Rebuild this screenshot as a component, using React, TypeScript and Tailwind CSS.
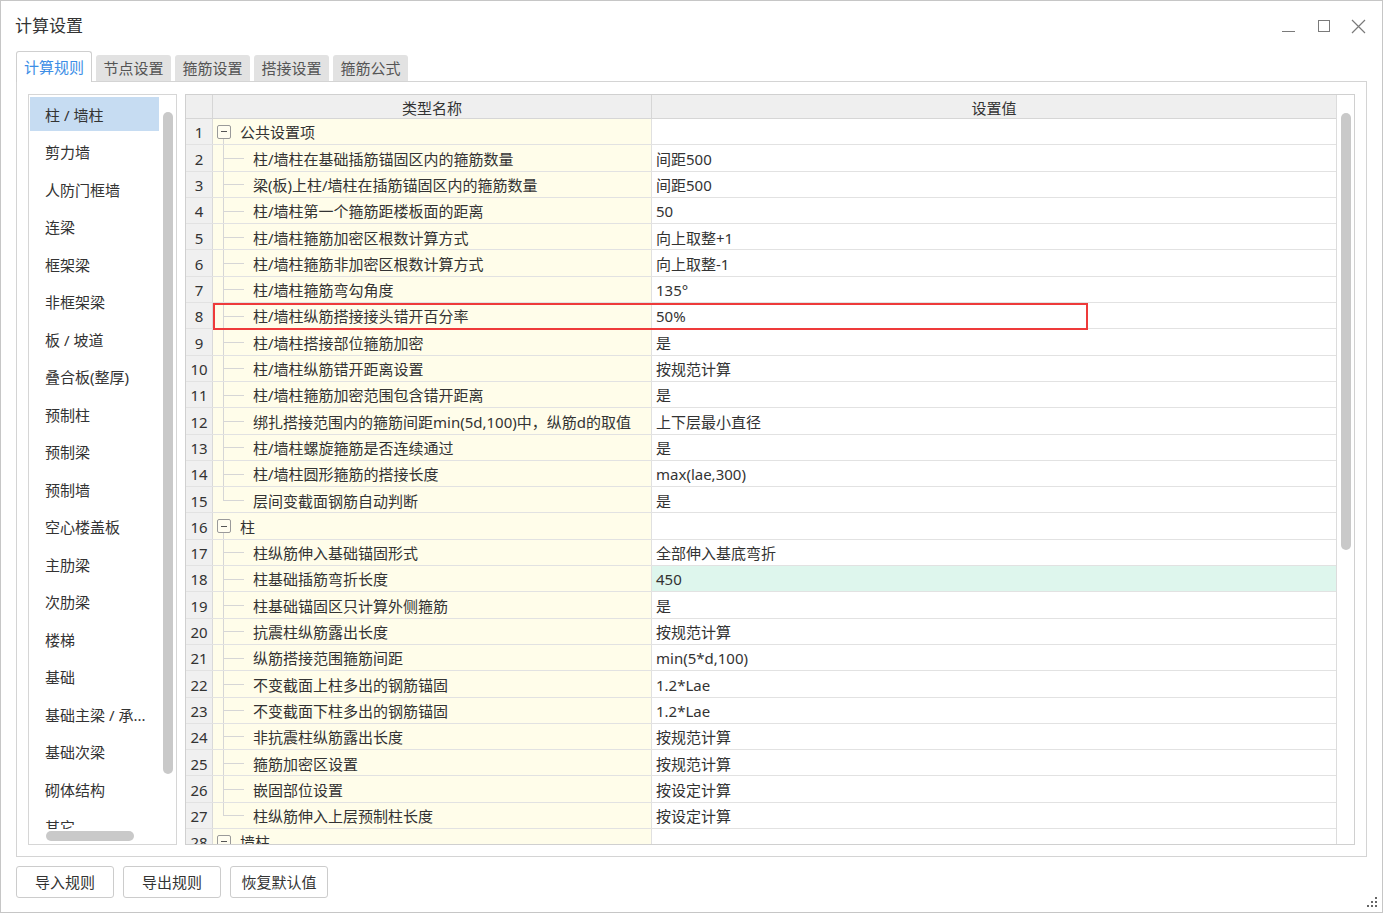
import React from "react";

type Row = {
  n: number;
  name: string;
  value: string;
  kind: "group" | "child" | "last";
  green?: boolean;
};

const rows: Row[] = [
  { n: 1, name: "公共设置项", value: "", kind: "group" },
  { n: 2, name: "柱/墙柱在基础插筋锚固区内的箍筋数量", value: "间距500", kind: "child" },
  { n: 3, name: "梁(板)上柱/墙柱在插筋锚固区内的箍筋数量", value: "间距500", kind: "child" },
  { n: 4, name: "柱/墙柱第一个箍筋距楼板面的距离", value: "50", kind: "child" },
  { n: 5, name: "柱/墙柱箍筋加密区根数计算方式", value: "向上取整+1", kind: "child" },
  { n: 6, name: "柱/墙柱箍筋非加密区根数计算方式", value: "向上取整-1", kind: "child" },
  { n: 7, name: "柱/墙柱箍筋弯勾角度", value: "135°", kind: "child" },
  { n: 8, name: "柱/墙柱纵筋搭接接头错开百分率", value: "50%", kind: "child" },
  { n: 9, name: "柱/墙柱搭接部位箍筋加密", value: "是", kind: "child" },
  { n: 10, name: "柱/墙柱纵筋错开距离设置", value: "按规范计算", kind: "child" },
  { n: 11, name: "柱/墙柱箍筋加密范围包含错开距离", value: "是", kind: "child" },
  { n: 12, name: "绑扎搭接范围内的箍筋间距min(5d,100)中，纵筋d的取值", value: "上下层最小直径", kind: "child" },
  { n: 13, name: "柱/墙柱螺旋箍筋是否连续通过", value: "是", kind: "child" },
  { n: 14, name: "柱/墙柱圆形箍筋的搭接长度", value: "max(lae,300)", kind: "child" },
  { n: 15, name: "层间变截面钢筋自动判断", value: "是", kind: "last" },
  { n: 16, name: "柱", value: "", kind: "group" },
  { n: 17, name: "柱纵筋伸入基础锚固形式", value: "全部伸入基底弯折", kind: "child" },
  { n: 18, name: "柱基础插筋弯折长度", value: "450", kind: "child", green: true },
  { n: 19, name: "柱基础锚固区只计算外侧箍筋", value: "是", kind: "child" },
  { n: 20, name: "抗震柱纵筋露出长度", value: "按规范计算", kind: "child" },
  { n: 21, name: "纵筋搭接范围箍筋间距", value: "min(5*d,100)", kind: "child" },
  { n: 22, name: "不变截面上柱多出的钢筋锚固", value: "1.2*Lae", kind: "child" },
  { n: 23, name: "不变截面下柱多出的钢筋锚固", value: "1.2*Lae", kind: "child" },
  { n: 24, name: "非抗震柱纵筋露出长度", value: "按规范计算", kind: "child" },
  { n: 25, name: "箍筋加密区设置", value: "按规范计算", kind: "child" },
  { n: 26, name: "嵌固部位设置", value: "按设定计算", kind: "child" },
  { n: 27, name: "柱纵筋伸入上层预制柱长度", value: "按设定计算", kind: "last" },
  { n: 28, name: "墙柱", value: "", kind: "group" },
];

const categories = [
  "柱 / 墙柱",
  "剪力墙",
  "人防门框墙",
  "连梁",
  "框架梁",
  "非框架梁",
  "板 / 坡道",
  "叠合板(整厚)",
  "预制柱",
  "预制梁",
  "预制墙",
  "空心楼盖板",
  "主肋梁",
  "次肋梁",
  "楼梯",
  "基础",
  "基础主梁 / 承...",
  "基础次梁",
  "砌体结构",
  "其它",
];

const tabs = ["计算规则", "节点设置", "箍筋设置", "搭接设置", "箍筋公式"];

function TreeCell({ row }: { row: Row }) {
  if (row.kind === "group") {
    return (
      <div className="relative flex h-full w-[439px] shrink-0 items-center border-r border-[#e0e0e0] bg-[#fffdea]">
        <span className="absolute left-[10px] top-1/2 bottom-0 w-px bg-[#d6d6d6]" />
        <span className="relative z-10 ml-[4px] flex h-[14px] w-[14px] items-center justify-center rounded-[2px] border border-[#9a9a9a] bg-[#fffdf0]">
          <span className="h-px w-[6px] bg-[#555]" />
        </span>
        <span className="ml-[9px] pt-[2px]">{row.name}</span>
      </div>
    );
  }
  return (
    <div className="relative flex h-full w-[439px] shrink-0 items-center border-r border-[#e0e0e0] bg-[#fffdea]">
      <span
        className={`absolute left-[10px] top-0 w-px bg-[#d6d6d6] ${
          row.kind === "last" ? "h-1/2" : "bottom-0"
        }`}
      />
      <span className="absolute left-[10px] top-1/2 h-px w-[21px] bg-[#d6d6d6]" />
      <span className="ml-[40px] whitespace-nowrap pt-[2px]">{row.name}</span>
    </div>
  );
}

export default function App() {
  return (
    <div className="relative flex h-[913px] w-[1383px] flex-col overflow-hidden border border-[#c6c6c6] bg-white font-['Noto_Sans','Noto_Sans_CJK_SC',sans-serif] text-[15px] text-[#333]">
      {/* title bar */}
      <div className="flex h-[50px] shrink-0 items-center justify-between pl-[14px]">
        <span className="text-[17px] text-[#333]">计算设置</span>
        <div className="flex items-center">
          <svg width="14" height="14" viewBox="0 0 14 14" className="mr-[21px] mt-[3px]">
            <line x1="0" y1="10.5" x2="13" y2="10.5" stroke="#7a7a7a" strokeWidth="1" />
          </svg>
          <svg width="14" height="14" viewBox="0 0 14 14" className="mr-[20px]">
            <rect x="1.5" y="1.5" width="11" height="11" fill="none" stroke="#7a7a7a" strokeWidth="1" />
          </svg>
          <svg width="15" height="15" viewBox="0 0 15 15" className="mr-[16px]">
            <path d="M1 1 L14 14 M14 1 L1 14" stroke="#7a7a7a" strokeWidth="1.2" />
          </svg>
        </div>
      </div>

      {/* tabs */}
      <div className="flex h-[30px] shrink-0 items-end gap-[4px] pl-[15px]">
        {tabs.map((t, i) =>
          i === 0 ? (
            <div
              key={t}
              className="relative z-10 -mb-px flex h-[31px] w-[76px] items-center justify-center rounded-t-[3px] border border-b-0 border-[#cfcfcf] bg-white text-[#3d8ee6]"
            >
              {t}
            </div>
          ) : (
            <div
              key={t}
              className="flex h-[26px] w-[75px] items-center justify-center rounded-t-[3px] bg-[#e2e2e2] text-[#555]"
            >
              {t}
            </div>
          )
        )}
      </div>

      {/* panel */}
      <div className="mx-[15px] flex h-[776px] shrink-0 gap-[8px] border border-[#d4d4d4] px-[11px] pt-[12px] pb-[11px]">
        {/* category list */}
        <div className="flex h-[751px] w-[149px] shrink-0 flex-col border border-[#d6d6d6]">
          <div className="flex h-[734px] overflow-hidden">
            <div className="w-[130px] shrink-0 pl-px pt-[2px]">
              {categories.map((c, i) => (
                <div
                  key={c}
                  className={`mb-[3.5px] flex h-[34px] items-center whitespace-nowrap pl-[15px] pt-[2px] ${
                    i === 0 ? "bg-[#c6dcf2]" : ""
                  }`}
                >
                  {c}
                </div>
              ))}
            </div>
            <div className="flex-1 pl-[4px] pt-[17px]">
              <div className="h-[662px] w-[10px] rounded-full bg-[#c9c9c9]" />
            </div>
          </div>
          <div className="flex-1 pl-[17px] pt-[2px]">
            <div className="h-[10px] w-[88px] rounded-full bg-[#c9c9c9]" />
          </div>
        </div>

        {/* table */}
        <div className="relative flex h-[751px] flex-1 border border-[#d0d0d0]">
          <div className="flex flex-1 flex-col overflow-hidden">
            <div className="flex h-[24px] shrink-0 border-b border-[#d6d6d6] bg-[#efefef]">
              <div className="w-[27px] shrink-0 border-r border-[#d6d6d6]" />
              <div className="flex w-[439px] shrink-0 items-center justify-center border-r border-[#d6d6d6] pt-[3px]">
                类型名称
              </div>
              <div className="flex flex-1 items-center justify-center pt-[3px]">设置值</div>
            </div>
            {rows.map((r) => (
              <div key={r.n} className="flex h-[26.3px] shrink-0 border-b border-[#e2e2e2]">
                <div className="flex w-[27px] shrink-0 items-center justify-center border-r border-[#d9d9d9] bg-[#f0f0f0] pt-[2px]">
                  {r.n}
                </div>
                <TreeCell row={r} />
                <div
                  className={`flex flex-1 items-center whitespace-nowrap pl-[4px] pt-[2px] ${
                    r.green ? "bg-[#def6ed]" : "bg-white"
                  }`}
                >
                  {r.value}
                </div>
              </div>
            ))}
          </div>
          <div className="w-[18px] shrink-0 border-l border-[#dcdcdc] pl-[4px] pt-[18px]">
            <div className="h-[437px] w-[10px] rounded-full bg-[#c9c9c9]" />
          </div>

          {/* highlight box */}
          <div className="pointer-events-none absolute left-[27px] top-[208px] h-[27px] w-[875px] border-2 border-[#ee3a3a]" />
        </div>
      </div>

      {/* buttons */}
      <div className="mt-[9px] flex gap-[9px] pl-[15px]">
        {["导入规则", "导出规则", "恢复默认值"].map((b) => (
          <button
            key={b}
            className="flex h-[32px] w-[98px] items-center justify-center rounded-[3px] border border-[#cccccc] bg-white text-[#333]"
          >
            {b}
          </button>
        ))}
      </div>

      {/* resize grip */}
      <svg width="11" height="11" viewBox="0 0 11 11" className="absolute bottom-[4px] right-[4px]">
        <rect x="8" y="0" width="2" height="2" fill="#666" />
        <rect x="4" y="4" width="2" height="2" fill="#666" />
        <rect x="8" y="4" width="2" height="2" fill="#666" />
        <rect x="0" y="8" width="2" height="2" fill="#666" />
        <rect x="4" y="8" width="2" height="2" fill="#666" />
        <rect x="8" y="8" width="2" height="2" fill="#666" />
      </svg>
    </div>
  );
}
